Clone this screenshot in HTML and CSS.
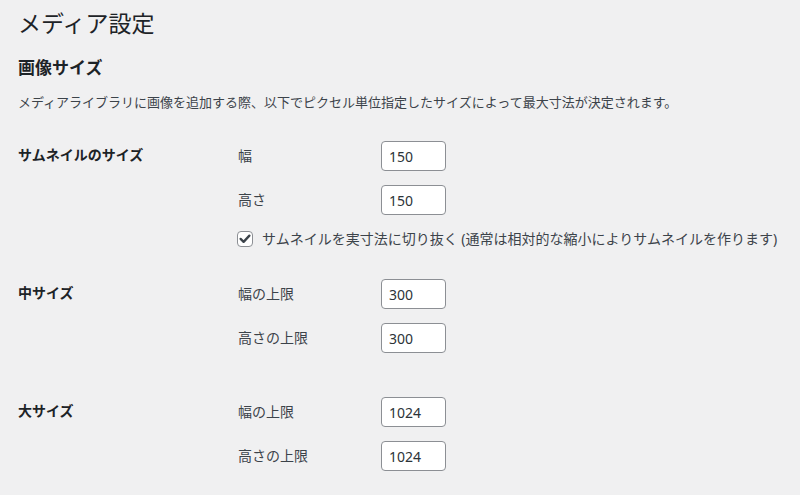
FILE: index.html
```html
<!DOCTYPE html>
<html lang="ja">
<head>
<meta charset="utf-8">
<title>メディア設定</title>
<link rel="stylesheet" href="styles.css">
</head>
<body>
<div class="wrap">
  <h1 class="page-title">メディア設定</h1>
  <h2 class="section-title">画像サイズ</h2>
  <p class="desc">メディアライブラリに画像を追加する際、以下でピクセル単位指定したサイズによって最大寸法が決定されます。</p>
  <div class="form-table">
    <div class="row">
      <div class="th">サムネイルのサイズ</div>
      <div class="td">
        <div class="field"><label class="flabel" for="tw">幅</label><input class="small-text" id="tw" type="text" value="150"></div>
        <div class="field"><label class="flabel" for="th">高さ</label><input class="small-text" id="th" type="text" value="150"></div>
        <label class="check-line">
          <span class="checkbox"><svg width="16" height="16" viewBox="0 0 16 16"><path d="M3.6 7.9 L6.6 10.9 L12.4 4.6" fill="none" stroke="#3c434a" stroke-width="2.3" stroke-linecap="round" stroke-linejoin="round"/></svg></span>
          <span>サムネイルを実寸法に切り抜く (通常は相対的な縮小によりサムネイルを作ります)</span>
        </label>
      </div>
    </div>
    <div class="row">
      <div class="th">中サイズ</div>
      <div class="td">
        <div class="field"><label class="flabel" for="mw">幅の上限</label><input class="small-text" id="mw" type="text" value="300"></div>
        <div class="field"><label class="flabel" for="mh">高さの上限</label><input class="small-text" id="mh" type="text" value="300"></div>
      </div>
    </div>
    <div class="row">
      <div class="th">大サイズ</div>
      <div class="td">
        <div class="field"><label class="flabel" for="lw">幅の上限</label><input class="small-text" id="lw" type="text" value="1024"></div>
        <div class="field"><label class="flabel" for="lh">高さの上限</label><input class="small-text" id="lh" type="text" value="1024"></div>
      </div>
    </div>
  </div>
</div>
</body>
</html>
```
FILE: styles.css
```css
html, body {
  margin: 0;
  padding: 0;
  background: #f0f0f1;
}
body {
  font-family: "Noto Sans", "Noto Sans CJK JP", sans-serif;
  color: #3c434a;
  font-size: 13px;
}
.wrap {
  padding: 8px 0 0 18px;
}
.page-title {
  margin: 0;
  font-size: 23px;
  font-weight: 400;
  line-height: 30px;
  color: #1d2327;
}
.section-title {
  margin: 19px 0 0;
  font-size: 17px;
  font-weight: 700;
  line-height: 22px;
  color: #1d2327;
}
.desc {
  margin: 14px 0 0;
  font-size: 13px;
  line-height: 19px;
}
.form-table {
  margin-top: 14px;
  display: flex;
  flex-direction: column;
}
.row {
  display: flex;
}
.th {
  width: 200px;
  padding: 20px 10px 20px 0;
  font-size: 14px;
  font-weight: 700;
  line-height: 18px;
  color: #1d2327;
}
.td {
  padding: 15px 10px;
  font-size: 14px;
  display: flex;
  flex-direction: column;
}
.field {
  display: flex;
  align-items: center;
  margin-bottom: 14px;
}
.flabel {
  width: 143px;
  line-height: 18px;
}
.small-text {
  box-sizing: border-box;
  width: 65px;
  height: 30px;
  margin: 0;
  padding: 0 7px;
  border: 1px solid #8c8f94;
  border-radius: 4px;
  background: #fff;
  font-family: inherit;
  font-size: 14px;
  color: #2c3338;
}
.check-line {
  display: flex;
  align-items: center;
  height: 20px;
  margin-left: -1px;
  line-height: 20px;
}
.checkbox {
  box-sizing: border-box;
  width: 16px;
  height: 16px;
  border: 1px solid #8c8f94;
  border-radius: 4px;
  background: #fff;
  margin-right: 9px;
  display: flex;
  align-items: center;
  justify-content: center;
}
.checkbox svg {
  display: block;
  margin: -1px;
}
```
